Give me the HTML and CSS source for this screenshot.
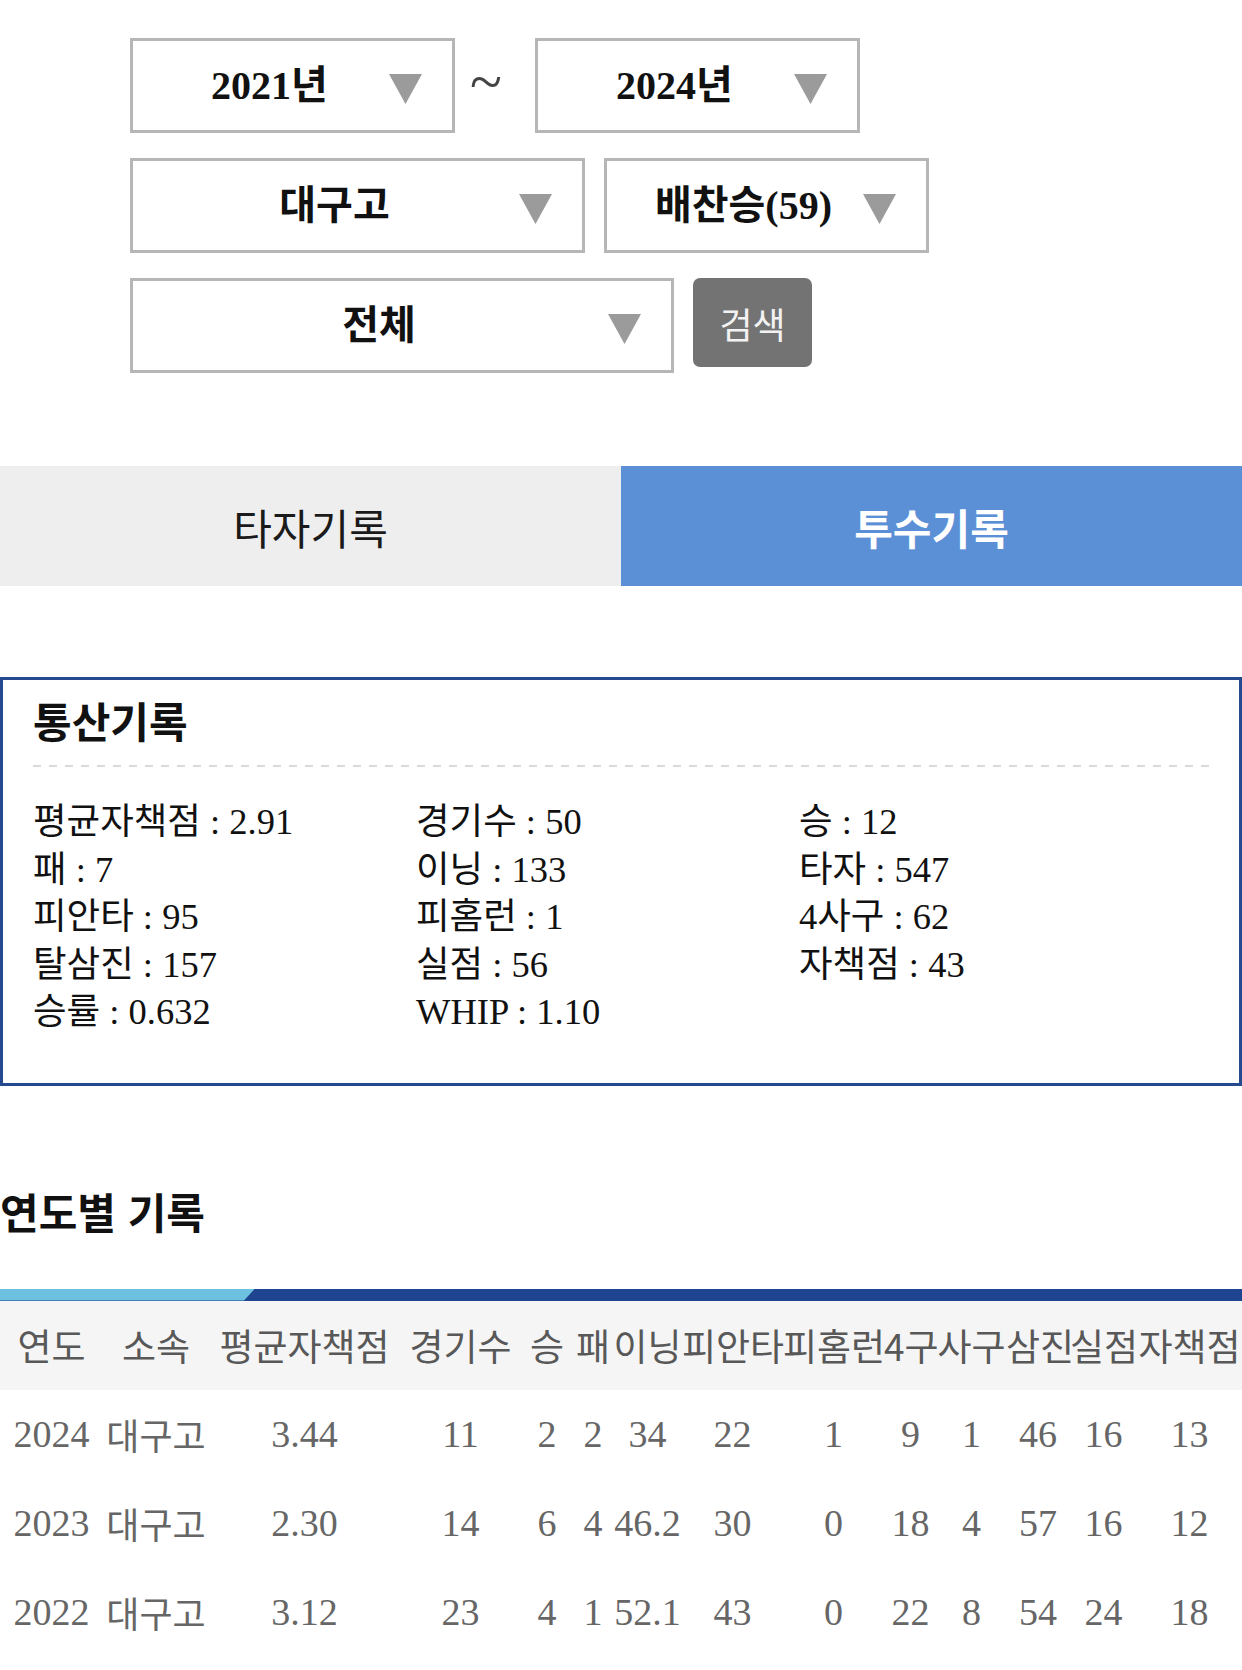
FILE: index.html
```html
<!DOCTYPE html>
<html lang="ko">
<head>
    <meta charset="UTF-8">
    <title>투수기록</title>
    <link rel="stylesheet" href="styles.css">
</head>
<body>
    <div class="filters">
        <div class="filter-row">
            <div class="select w-year">
                <span class="select-text">2021년</span>
                <svg class="arrow" width="33" height="30" viewBox="0 0 33 30"><polygon points="0,0 33,0 16.5,30" fill="#9b9b9b"/></svg>
            </div>
            <span class="tilde">~</span>
            <div class="select w-year">
                <span class="select-text">2024년</span>
                <svg class="arrow" width="33" height="30" viewBox="0 0 33 30"><polygon points="0,0 33,0 16.5,30" fill="#9b9b9b"/></svg>
            </div>
        </div>
        <div class="filter-row">
            <div class="select w-team">
                <span class="select-text">대구고</span>
                <svg class="arrow" width="33" height="30" viewBox="0 0 33 30"><polygon points="0,0 33,0 16.5,30" fill="#9b9b9b"/></svg>
            </div>
            <div class="select w-player">
                <span class="select-text">배찬승(59)</span>
                <svg class="arrow" width="33" height="30" viewBox="0 0 33 30"><polygon points="0,0 33,0 16.5,30" fill="#9b9b9b"/></svg>
            </div>
        </div>
        <div class="filter-row">
            <div class="select w-type">
                <span class="select-text">전체</span>
                <svg class="arrow" width="33" height="30" viewBox="0 0 33 30"><polygon points="0,0 33,0 16.5,30" fill="#9b9b9b"/></svg>
            </div>
            <button class="search-btn" type="button">검색</button>
        </div>
    </div>

    <div class="tabs">
        <div class="tab">타자기록</div>
        <div class="tab active">투수기록</div>
    </div>

    <div class="career">
        <h2 class="career-title">통산기록</h2>
        <div class="divider"></div>
        <div class="career-grid">
            <div>평균자책점 : 2.91</div>
            <div>경기수 : 50</div>
            <div>승 : 12</div>
            <div>패 : 7</div>
            <div>이닝 : 133</div>
            <div>타자 : 547</div>
            <div>피안타 : 95</div>
            <div>피홈런 : 1</div>
            <div>4사구 : 62</div>
            <div>탈삼진 : 157</div>
            <div>실점 : 56</div>
            <div>자책점 : 43</div>
            <div>승률 : 0.632</div>
            <div>WHIP : 1.10</div>
        </div>
    </div>

    <h2 class="section-title">연도별 기록</h2>

    <div class="table-bar"><div class="table-bar-accent"></div></div>
    <table class="records">
        <colgroup>
            <col style="width: 103px">
            <col style="width: 106px">
            <col style="width: 191px">
            <col style="width: 121px">
            <col style="width: 52px">
            <col style="width: 40px">
            <col style="width: 69px">
            <col style="width: 101px">
            <col style="width: 101px">
            <col style="width: 53px">
            <col style="width: 69px">
            <col style="width: 64px">
            <col style="width: 67px">
            <col style="width: 105px">
        </colgroup>
        <thead>
            <tr>
                <th>연도</th>
                <th>소속</th>
                <th>평균자책점</th>
                <th>경기수</th>
                <th>승</th>
                <th>패</th>
                <th>이닝</th>
                <th>피안타</th>
                <th>피홈런</th>
                <th>4구</th>
                <th>사구</th>
                <th>삼진</th>
                <th>실점</th>
                <th>자책점</th>
            </tr>
        </thead>
        <tbody>
            <tr>
                <td>2024</td><td class="team">대구고</td><td>3.44</td><td>11</td><td>2</td><td>2</td><td>34</td>
                <td>22</td><td>1</td><td>9</td><td>1</td><td>46</td><td>16</td><td>13</td>
            </tr>
            <tr>
                <td>2023</td><td class="team">대구고</td><td>2.30</td><td>14</td><td>6</td><td>4</td><td>46.2</td>
                <td>30</td><td>0</td><td>18</td><td>4</td><td>57</td><td>16</td><td>12</td>
            </tr>
            <tr>
                <td>2022</td><td class="team">대구고</td><td>3.12</td><td>23</td><td>4</td><td>1</td><td>52.1</td>
                <td>43</td><td>0</td><td>22</td><td>8</td><td>54</td><td>24</td><td>18</td>
            </tr>
        </tbody>
    </table>
</body>
</html>
```

FILE: styles.css
```css
body {
    margin: 0;
    font-family: "Liberation Serif", "Noto Sans CJK KR", serif;
    color: #111;
    background: #fff;
}

.filters {
    display: flex;
    flex-direction: column;
    gap: 25px;
    padding: 38px 0 0 130px;
}

.filter-row {
    display: flex;
    align-items: flex-start;
    gap: 19px;
}

.select {
    box-sizing: border-box;
    height: 95px;
    border: 3px solid #b6b6b6;
    display: flex;
    align-items: center;
    padding: 0 30px 0 17px;
    font-size: 40px;
    font-weight: bold;
}

.select-text {
    flex: 1;
    text-align: center;
    white-space: nowrap;
    padding-bottom: 8px;
}

.arrow {
    display: block;
    flex-shrink: 0;
    margin-top: 6px;
}

.w-year {
    width: 325px;
}

.w-team {
    width: 455px;
}

.w-player {
    width: 325px;
}

.w-type {
    width: 544px;
}

.tilde {
    align-self: center;
    width: 32px;
    margin: 0 14px 0 -4px;
    padding-bottom: 6px;
    font-size: 59px;
    line-height: 1;
    color: #444;
}

.search-btn {
    width: 119px;
    height: 89px;
    border: none;
    border-radius: 7px;
    background: #737373;
    color: #f2f2f2;
    font-family: "Noto Sans CJK KR", sans-serif;
    font-size: 36px;
    padding: 0;
}

.tabs {
    display: flex;
    height: 120px;
    margin-top: 93px;
}

.tab {
    flex: 1;
    display: flex;
    align-items: center;
    justify-content: center;
    background: #eeeeee;
    font-family: "Noto Sans CJK KR", sans-serif;
    font-size: 42px;
    color: #1a1a1a;
}

.tab.active {
    background: #5b90d7;
    color: #fff;
    font-weight: bold;
}

.career {
    margin-top: 91px;
    border: 3px solid #24498f;
    padding: 16px 29px 47px 30px;
}

.career-title {
    margin: 0;
    font-family: "Noto Sans CJK KR", sans-serif;
    font-size: 42px;
    line-height: 47px;
    font-weight: bold;
}

.divider {
    height: 2px;
    margin-top: 22px;
    background: repeating-linear-gradient(to right, #d9d9d9 0 8px, transparent 8px 16px);
}

.career-grid {
    display: grid;
    grid-template-columns: repeat(3, 383px);
    margin-top: 31px;
    font-size: 36.5px;
    line-height: 47.5px;
    color: #111;
}

.section-title {
    margin: 100px 0 0;
    font-family: "Noto Sans CJK KR", sans-serif;
    font-size: 42px;
    line-height: 50px;
    font-weight: bold;
}

.table-bar {
    height: 12px;
    margin-top: 53px;
    background: #1f4591;
}

.table-bar-accent {
    width: 255px;
    height: 100%;
    background: #6cc0e0;
    clip-path: polygon(0 0, 100% 0, calc(100% - 11px) 100%, 0 100%);
}

.records {
    width: 100%;
    table-layout: fixed;
    border-collapse: collapse;
}

.records th {
    height: 89px;
    padding: 0;
    background: #f5f5f5;
    font-family: "Noto Sans CJK KR", sans-serif;
    font-size: 37px;
    font-weight: normal;
    color: #585858;
    white-space: nowrap;
    text-align: center;
}

.records td {
    height: 89px;
    padding: 0;
    font-size: 38px;
    color: #666;
    white-space: nowrap;
    text-align: center;
}

.records td.team {
    font-size: 36px;
}
```
